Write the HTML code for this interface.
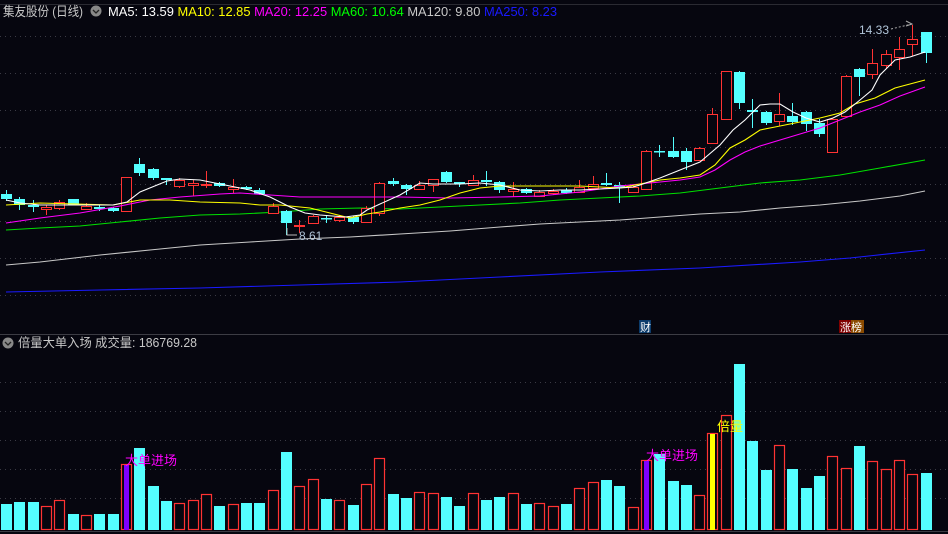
<!DOCTYPE html>
<html><head><meta charset="utf-8">
<style>
html,body{margin:0;padding:0;background:#06060f;width:948px;height:534px;overflow:hidden}
svg{display:block}
text{font-family:"Liberation Sans","Noto Sans CJK SC",sans-serif}
</style></head>
<body>
<svg id="s" width="948" height="534" xmlns="http://www.w3.org/2000/svg">
<rect width="948" height="534" fill="#06060f"/>
<g stroke="#3a3a44" stroke-dasharray="1,4" stroke-width="1">
<line x1="0" y1="36.5" x2="948" y2="36.5"/><line x1="0" y1="73.5" x2="948" y2="73.5"/>
<line x1="0" y1="110.5" x2="948" y2="110.5"/><line x1="0" y1="147.5" x2="948" y2="147.5"/>
<line x1="0" y1="184.5" x2="948" y2="184.5"/><line x1="0" y1="221.5" x2="948" y2="221.5"/>
<line x1="0" y1="258.5" x2="948" y2="258.5"/><line x1="0" y1="295.5" x2="948" y2="295.5"/>
<line x1="0" y1="382.5" x2="948" y2="382.5"/><line x1="0" y1="411.5" x2="948" y2="411.5"/>
<line x1="0" y1="440.5" x2="948" y2="440.5"/><line x1="0" y1="469.5" x2="948" y2="469.5"/>
<line x1="0" y1="498.5" x2="948" y2="498.5"/>
</g>
<line x1="0" y1="334.5" x2="948" y2="334.5" stroke="#3c3c44"/>
<line x1="0" y1="531.5" x2="948" y2="531.5" stroke="#3c3c44"/>
<line x1="0" y1="4.5" x2="948" y2="4.5" stroke="#2a2a32"/>

<g fill="none" stroke-width="1.1">
<polyline stroke="#1a1aff" points="6,292 100,290 200,288 300,285 400,282 500,277 600,272 700,268 800,262 850,258 925,250"/>
<polyline stroke="#c8c8c8" points="6,265 40,262 100,255 150,250 200,245 250,242 300,239 350,237 400,234 450,231 500,227 540,224 580,222 620,220 660,217 700,214 740,212 780,208 820,205 860,201 900,196 925,191"/>
<polyline stroke="#00e000" points="6,230 40,228 80,226 120,222 160,218 200,215 240,214 280,212 320,209 360,208 400,209 440,207 480,205 520,203 560,200 600,198 640,196 680,193 720,188 760,183 800,180 840,175 880,168 925,160"/>
</g>
<g id="cand"></g>
<g fill="none" stroke-width="1.1">
<polyline stroke="#ff00ff" points="6,223 40,218 80,213 120,206 150,200 180,197 220,194 240,193 270,195 300,197 320,197 400,197 450,198 500,197 540,196 580,192 620,186 650,183 680,180 700,177 715,170 730,160 745,152 760,146 780,140 800,134 820,128 840,120 860,112 880,105 900,96 925,87"/>
<polyline stroke="#ffff00" points="6,205 40,203 113,205 140,200 170,200 200,202 240,203 260,205 280,205 310,208 330,213 350,218 367,214 380,212 400,208 420,205 440,200 460,193 480,188 500,186 540,186 580,186 620,188 640,184 660,180 680,178 700,175 715,165 730,148 745,140 760,130 775,127 800,122 820,118 840,113 855,104 875,98 895,88 925,80"/>
<polyline stroke="#ffffff" points="6,200 20,203 40,205 113,205 127,202 140,192 167,181 180,179 200,180 220,184 250,190 270,197 290,207 305,213 320,215 345,217 360,215 367,210 380,204 400,195 420,183 433,184 460,184 480,183 500,185 520,190 540,191 560,190 580,190 600,189 620,188 633,187 640,185 660,178 680,170 700,162 720,145 733,130 745,120 760,105 770,104 780,104 793,112 806,118 820,122 833,118 845,112 860,100 872,90 880,75 895,60 910,57 925,52"/>
</g>
<polyline points="287,228 287,235 297,235" fill="none" stroke="#bbb"/>
<text x="299" y="240" fill="#b0c4d8" font-size="12">8.61</text>
<text x="859" y="34" fill="#b0c4d8" font-size="12">14.33</text>
<polyline points="891,29 912,24" fill="none" stroke="#aaa" stroke-dasharray="2,2"/>
<polyline points="906,21 912,24 906,26" fill="none" stroke="#aaa"/>

<g id="vol"></g>

<rect x="639" y="320" width="12" height="13" fill="#0c3c6c"/>
<text x="640" y="331" fill="#fff" font-size="11">财</text>
<rect x="839" y="320" width="12" height="13" fill="#800000"/>
<rect x="851" y="320" width="13" height="13" fill="#8a4a00"/>
<text x="840" y="331" fill="#fff" font-size="11">涨榜</text>

<text x="3" y="16" fill="#c8c8c8" font-size="13" textLength="80" lengthAdjust="spacingAndGlyphs">集友股份 (日线)</text>
<circle cx="96" cy="11" r="5.5" fill="#888"/><polyline points="93,10 96,13 99,10" fill="none" stroke="#222" stroke-width="1.3"/>
<text x="108" y="16" font-size="13" textLength="449" lengthAdjust="spacingAndGlyphs"><tspan fill="#fff">MA5: 13.59 </tspan><tspan fill="#ffff00">MA10: 12.85 </tspan><tspan fill="#ff00ff">MA20: 12.25 </tspan><tspan fill="#00ff00">MA60: 10.64 </tspan><tspan fill="#c8c8c8">MA120: 9.80 </tspan><tspan fill="#1a1aff">MA250: 8.23</tspan></text>

<circle cx="8" cy="343" r="5.5" fill="#888"/><polyline points="5,342 8,345 11,342" fill="none" stroke="#222" stroke-width="1.3"/>
<text x="18" y="347" fill="#c8c8c8" font-size="12.5" textLength="179" lengthAdjust="spacingAndGlyphs">倍量大单入场 成交量: 186769.28</text>
</svg>
<script>
var C=[[0,'c',194,199,190,201],[1,'c',199,205,197,210],[2,'c',205,207,200,212],[3,'r',207,209,205,215],[4,'r',202,208,200,210],[5,'c',199,205,199,205],[6,'r',206,209,203,210],[7,'c',207,209,205,211],[8,'c',208,211,207,212],[9,'r',177,211,177,211],
[10,'c',164,173,158,176],[11,'c',169,178,168,180],[12,'c',178,180,178,185],[13,'r',180,186,178,188],[14,'r',183,185,180,196],[15,'r',184,185,171,188],[16,'c',183,186,182,187],[17,'r',187,189,179,193],[18,'c',187,189,186,190],[19,'c',190,194,188,195],
[20,'r',206,213,203,214],[21,'c',211,223,210,235],[22,'r',225,226,220,233],[23,'r',216,223,215,224],[24,'c',218,219,215,223],[25,'r',217,220,215,222],[26,'c',217,222,216,224],[27,'r',208,222,206,223],[28,'r',183,213,182,216],[29,'c',181,184,178,186],
[30,'c',185,189,184,195],[31,'r',185,189,181,190],[32,'r',179,185,179,192],[33,'c',172,182,171,183],[34,'c',182,184,182,187],[35,'r',180,185,175,186],[36,'c',180,182,171,186],[37,'c',182,190,181,193],[38,'r',189,191,182,197],[39,'c',189,193,188,194],
[40,'r',192,196,190,197],[41,'r',191,193,189,195],[42,'c',190,193,188,194],[43,'r',187,192,180,193],[44,'r',184,188,176,189],[45,'c',183,185,173,186],[46,'c',185,188,182,203],[47,'r',187,192,186,193],[48,'r',151,189,150,190],[49,'c',151,152,145,157],
[50,'c',151,157,137,158],[51,'c',151,162,148,170],[52,'r',148,160,147,161],[53,'r',114,143,108,144],[54,'r',71,119,71,120],[55,'c',72,103,71,109],[56,'c',110,112,99,128],[57,'c',112,123,111,125],[58,'r',114,121,93,126],[59,'c',116,122,103,125],
[60,'c',112,124,111,131],[61,'c',123,134,119,137],[62,'r',119,152,118,153],[63,'r',76,116,75,117],[64,'c',69,77,68,96],[65,'r',63,74,49,79],[66,'r',54,65,50,68],[67,'r',49,57,37,70],[68,'r',39,44,25,56],[69,'c',32,53,32,63]];
var V=[504,502,502,506,500,514,515,514,514,464,448,486,501,503,500,494,506,504,503,503,490,452,486,479,499,500,505,484,458,494,498,492,493,497,506,493,500,497,493,504,503,506,504,488,482,480,486,507,460,454,481,485,495,433,415,364,441,470,445,469,488,476,456,468,446,461,469,460,474,473];
var NS="http://www.w3.org/2000/svg";
function el(p,t,a){var e=document.createElementNS(NS,t);for(var k in a)e.setAttribute(k,a[k]);p.appendChild(e);return e;}
var cg=document.getElementById('cand'),vg=document.getElementById('vol');
C.forEach(function(c){var i=c[0],x=Math.round(1+13.33*i),cx=x+5.5,col=c[1]=='r'?'#ff3333':'#54ffff';
el(cg,'line',{x1:cx,y1:c[4],x2:cx,y2:c[5],stroke:col});
if(c[1]=='r'){el(cg,'rect',{x:x+0.5,y:c[2]+0.5,width:10,height:Math.max(c[3]-c[2],1),fill:'#06060f',stroke:col});}
else{el(cg,'rect',{x:x,y:c[2],width:11,height:Math.max(c[3]-c[2],1.5),fill:col});}
var t=V[i];
if(c[1]=='r'){el(vg,'rect',{x:x+0.5,y:t+0.5,width:10,height:529-t,fill:'#06060f',stroke:'#ff3333','stroke-width':1.2});}
else{el(vg,'rect',{x:x,y:t,width:11,height:530-t,fill:'#54ffff'});}
if(i==9||i==48)el(vg,'rect',{x:x+3,y:t+1,width:5,height:529-t,fill:'#8000ff'});
if(i==53)el(vg,'rect',{x:x+3,y:t+1,width:5,height:529-t,fill:'#ffff00'});
});
function tx(x,y,s,col){var e=el(vg,'text',{x:x,y:y,fill:col,'font-size':13});e.textContent=s;}
tx(125,465,'大单进场','#ff00ff');tx(646,460,'大单进场','#ff00ff');tx(717,431,'倍量','#ffff00');
</script>
</body></html>
